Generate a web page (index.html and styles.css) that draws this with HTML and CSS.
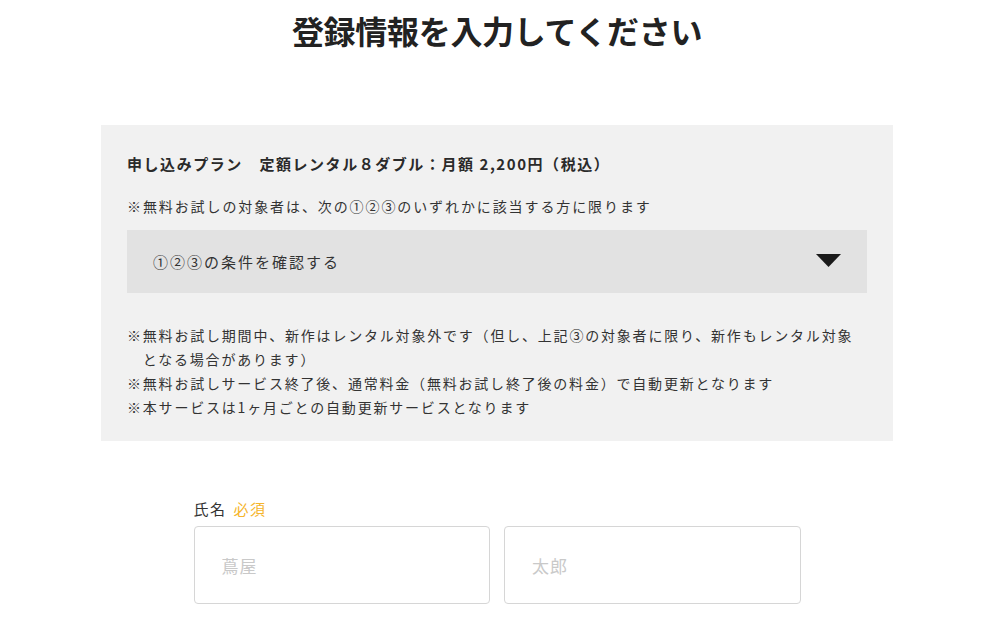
FILE: index.html
```html
<!DOCTYPE html>
<html lang="ja">
<head>
<meta charset="utf-8">
<title>登録情報を入力してください</title>
<link rel="stylesheet" href="styles.css">
</head>
<body>
<main class="page">
  <h1 class="title">登録情報を入力してください</h1>
  <section class="plan">
    <h2 class="plan-name">申し込みプラン　定額レンタル８ダブル：月額 2,200円（税込）</h2>
    <p class="plan-target">※無料お試しの対象者は、次の①②③のいずれかに該当する方に限ります</p>
    <div class="accordion">
      <span class="accordion-label">①②③の条件を確認する</span>
      <svg class="accordion-icon" width="25" height="13" viewBox="0 0 25 13" aria-hidden="true"><polygon points="0,0 25,0 12.5,13" fill="#1a1a1a"/></svg>
    </div>
    <div class="notes">
      <p class="note">※無料お試し期間中、新作はレンタル対象外です（但し、上記③の対象者に限り、新作もレンタル対象となる場合があります）</p>
      <p class="note">※無料お試しサービス終了後、通常料金（無料お試し終了後の料金）で自動更新となります</p>
      <p class="note">※本サービスは1ヶ月ごとの自動更新サービスとなります</p>
    </div>
  </section>
  <form class="form">
    <div class="field">
      <label class="field-label">氏名<span class="required">必須</span></label>
      <div class="field-row">
        <input class="input" type="text" placeholder="蔦屋">
        <input class="input" type="text" placeholder="太郎">
      </div>
    </div>
  </form>
</main>
</body>
</html>
```
FILE: styles.css
```css
* { box-sizing: border-box; }
html, body { margin: 0; padding: 0; background: #fff; }
body {
  font-family: "Noto Sans CJK JP", "Noto Sans", sans-serif;
  color: #333;
}
.page {
  width: 792px;
  margin: 0 0 0 101px;
}
.title {
  margin: 6px 0 0;
  font-size: 32px;
  line-height: 48px;
  font-weight: 700;
  letter-spacing: -0.3px;
  text-align: center;
  color: #222;
}
.plan {
  margin-top: 71px;
  background: #f1f1f1;
  padding: 27px 26px 22px;
}
.plan-name {
  margin: 0;
  font-size: 15px;
  line-height: 24px;
  font-weight: 700;
  letter-spacing: 1.55px;
  color: #2a2a2a;
}
.plan-target {
  margin: 18px 0 0;
  font-size: 14px;
  line-height: 24px;
  letter-spacing: 1.9px;
}
.accordion {
  margin-top: 12px;
  height: 63px;
  background: #e2e2e2;
  display: flex;
  align-items: center;
  justify-content: space-between;
  padding: 0 26px;
}
.accordion-label {
  font-size: 15px;
  letter-spacing: 2px;
  color: #333;
}
.accordion-icon { display: block; margin-top: -2px; }
.notes { margin-top: 30px; }
.note {
  margin: 0;
  font-size: 14px;
  line-height: 24px;
  letter-spacing: 1.8px;
  padding-left: calc(1em + 1.8px);
  text-indent: calc(-1em - 1.8px);
}
.form {
  width: 607px;
  margin: 58px auto 0;
}
.field-label {
  display: block;
  font-size: 15px;
  line-height: 20px;
  letter-spacing: 1.5px;
  color: #333;
}
.required {
  margin-left: 7px;
  color: #f5b52c;
}
.field-row {
  margin-top: 7px;
  display: flex;
  gap: 14px;
}
.input {
  flex: 1 1 0;
  min-width: 0;
  height: 78px;
  border: 1px solid #d6d6d6;
  border-radius: 4px;
  padding: 0 27px;
  font-family: inherit;
  font-size: 17px;
  letter-spacing: 1px;
  color: #333;
  background: #fff;
}
.input::placeholder { color: #c9c9c9; }
```
